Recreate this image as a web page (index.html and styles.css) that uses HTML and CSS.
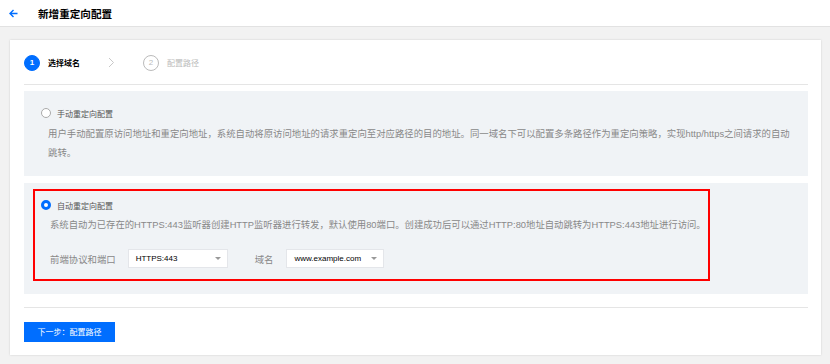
FILE: index.html
```html
<!DOCTYPE html>
<html lang="zh-CN">

    <head>
        <meta charset="UTF-8">
        <title>新增重定向配置</title>
        <link rel="stylesheet" href="styles.css">
    </head>

    <body>
        <div class="topbar">
            <a href="#" class="back">
                <svg width="9" height="9" viewBox="0 0 9 9"><path d="M8.5 4.5H1.2M4.5 1L1 4.5 4.5 8" fill="none" stroke="#006eff" stroke-width="1.4"/></svg>
            </a>
            <h1>新增重定向配置</h1>
        </div>
        <div class="main">
            <div class="card">
                <div class="steps">
                    <div class="step active"><span class="num">1</span>选择域名</div>
                    <span class="chevron">
                        <svg width="7" height="11" viewBox="0 0 7 11"><path d="M1 1l4.5 4.5L1 10" fill="none" stroke="#c8c8c8" stroke-width="1"/></svg>
                    </span>
                    <div class="step"><span class="num">2</span>配置路径</div>
                </div>
                <div class="option manual">
                    <label class="radio"><span class="dot"></span>手动重定向配置</label>
                    <p class="desc">用户手动配置原访问地址和重定向地址，系统自动将原访问地址的请求重定向至对应路径的目的地址。同一域名下可以配置多条路径作为重定向策略，实现http/https之间请求的自动跳转。</p>
                </div>
                <div class="option auto">
                    <div class="marked">
                        <label class="radio checked"><span class="dot"></span>自动重定向配置</label>
                        <p class="desc">系统自动为已存在的HTTPS:443监听器创建HTTP监听器进行转发，默认使用80端口。创建成功后可以通过HTTP:80地址自动跳转为HTTPS:443地址进行访问。</p>
                        <div class="form-row">
                            <span class="field-label">前端协议和端口</span>
                            <div class="select first">HTTPS:443<span class="caret"></span></div>
                            <span class="field-label domain">域名</span>
                            <div class="select">www.example.com<span class="caret"></span></div>
                        </div>
                    </div>
                </div>
                <div class="footer">
                    <button class="btn-primary">下一步：配置路径</button>
                </div>
            </div>
        </div>
    </body>

</html>
```

FILE: styles.css
```css
* {
    margin: 0;
    padding: 0;
    box-sizing: border-box;
}

body {
    width: 830px;
    height: 364px;
    background-color: #f2f2f2;
    font-family: "Liberation Sans", "Noto Sans CJK SC", sans-serif;
    color: #333;
    overflow: hidden;
}

.topbar {
    height: 27px;
    background: #fff;
    border-bottom: 1px solid #e2e2e2;
    display: flex;
    align-items: center;
    padding-left: 9px;
}

.topbar .back {
    display: flex;
    width: 9px;
    height: 9px;
    margin-right: 20px;
}

.topbar h1 {
    font-size: 10.6px;
    font-weight: bold;
    color: #000;
}

.main {
    padding: 13px 9px 10px 10px;
}

.card {
    background: #fff;
    box-shadow: 0 0 2px rgba(0, 0, 0, 0.15);
    padding: 0 13px 13px 14px;
}

/* 步骤条 */
.steps {
    height: 45px;
    display: flex;
    align-items: center;
    border-bottom: 1px solid #e5e5e5;
    padding-top: 1px;
}

.step {
    display: flex;
    align-items: center;
    font-size: 8px;
    color: #bbb;
}

.step .num {
    width: 16px;
    height: 16px;
    border-radius: 50%;
    border: 1px solid #bbb;
    display: flex;
    align-items: center;
    justify-content: center;
    font-size: 8px;
    margin-right: 8px;
}

.step.active {
    color: #000;
    font-weight: bold;
}

.step.active .num {
    background: #006eff;
    border-color: #006eff;
    color: #fff;
}

.chevron {
    display: flex;
    margin: 0 28px 0 28px;
}

/* 选项块 */
.option {
    background: #f0f3f6;
    margin-top: 6px;
}

.option.manual {
    padding: 17px 18px 0 17px;
    height: 85px;
}

.option.auto {
    margin-top: 7px;
    padding: 6px 98px 13px 9px;
}

.marked {
    border: 2px solid #f00;
    padding: 9px 0 11px 6px;
}

.radio {
    display: flex;
    align-items: center;
    font-size: 8px;
    color: #555;
    height: 10px;
}

.radio .dot {
    width: 10px;
    height: 10px;
    border-radius: 50%;
    border: 1px solid #aaa;
    background: #fff;
    margin-right: 6px;
}

.radio.checked .dot {
    border: 3px solid #006eff;
}

.desc {
    font-size: 9.4px;
    line-height: 19px;
    color: #888;
    margin-top: 6px;
    padding-left: 7px;
}

.auto .desc {
    margin-top: 6px;
    padding-left: 9px;
    font-size: 9.35px;
}

.form-row {
    display: flex;
    align-items: center;
    margin-top: 14px;
    padding-left: 9px;
}

.field-label {
    font-size: 9.4px;
    color: #888;
    margin-right: 12px;
}

.field-label.domain {
    margin-left: 27px;
    margin-right: 13px;
}

.select {
    width: 98px;
    height: 19px;
    background: #fff;
    border: 1px solid #e4e6ea;
    display: flex;
    align-items: center;
    justify-content: space-between;
    padding: 0 6px 0 7px;
    font-size: 8px;
    color: #000;
}

.select.first {
    width: 100px;
}

.caret {
    width: 0;
    height: 0;
    border-left: 3px solid transparent;
    border-right: 3px solid transparent;
    border-top: 3px solid #999;
}

.footer {
    border-top: 1px solid #e5e5e5;
    margin-top: 13px;
    padding-top: 13px;
}

.btn-primary {
    width: 91px;
    height: 20px;
    background: #006eff;
    border: none;
    color: #fff;
    font-family: inherit;
    font-size: 8px;
}
```
